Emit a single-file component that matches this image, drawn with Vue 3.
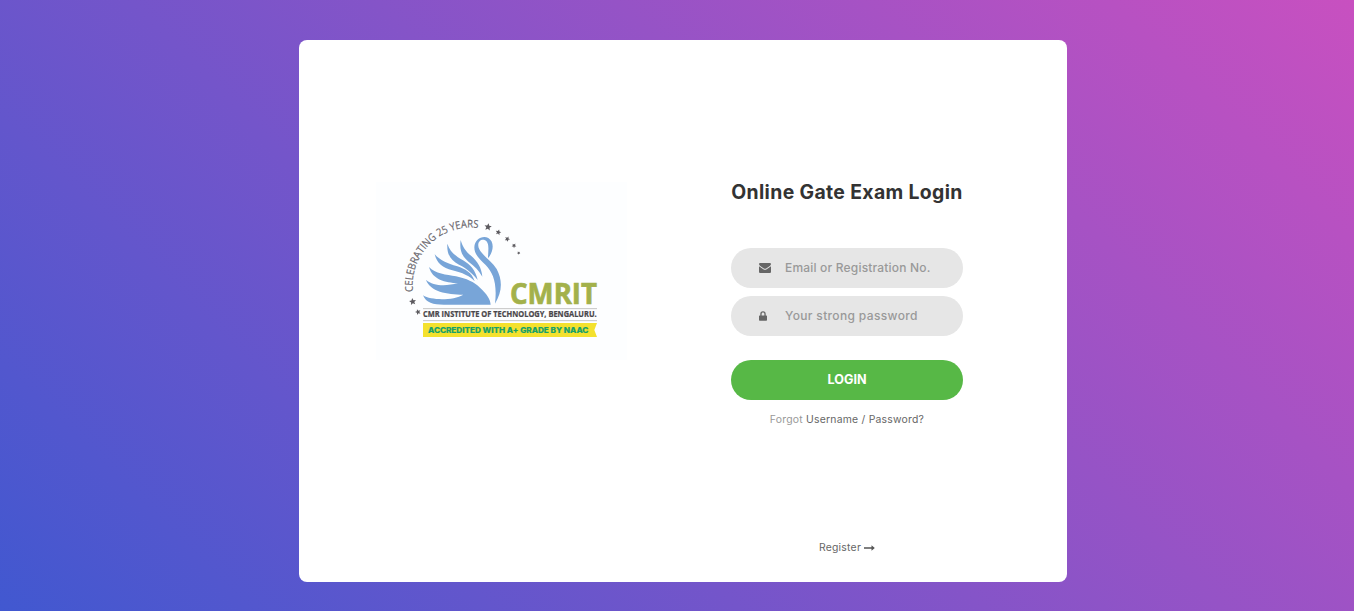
<script setup>
import { ref } from 'vue'

const account = ref('')
const password = ref('')

const stars = [
  { x: 354, y: 156, s: 11.5, r: 8 },
  { x: 385, y: 172, s: 9, r: 15 },
  { x: 412, y: 192, s: 8.5, r: 25 },
  { x: 432, y: 212, s: 7.5, r: 35 },
  { x: 446, y: 234, s: 5.5, r: 45 },
  { x: 128, y: 380, s: 11, r: -8 },
  { x: 144, y: 411, s: 9, r: -20 },
]
</script>

<template>
  <main class="page">
    <section class="card">
      <svg class="logo" viewBox="15 21 759 534" role="img" aria-label="CMRIT">
        <defs>
          <path id="arc" d="M129 350 A174 174 0 0 1 330 160" />
          <polygon id="star" points="0,-1 .28,-.36 .95,-.31 .43,.14 .59,.81 0,.44 -.59,.81 -.43,.14 -.95,-.31 -.28,-.36" />
        </defs>
        <rect x="18" y="21" width="753" height="534" fill="#fdfeff" />
        <text class="arc-text" textLength="314" lengthAdjust="spacingAndGlyphs">
          <textPath href="#arc" textLength="314" lengthAdjust="spacingAndGlyphs">CELEBRATING 25 YEARS</textPath>
        </text>
        <use
          v-for="(star, i) in stars"
          :key="i"
          href="#star"
          fill="#5c5a5f"
          :transform="`translate(${star.x} ${star.y}) rotate(${star.r}) scale(${star.s})`"
        />
        <g fill="#78a5d8">
          <path d="M354 250 C371 229 374 201 355 189 C337 180 314 193 313 217 C313 239 329 252 347 270 C370 294 382 325 375 386 C397 350 398 316 380 282 C365 258 337 241 328 223 C318 203 333 190 345 196 C360 203 354 228 354 250Z" />
          <path d="M272 195 C267 230 279 248 303 266 C321 280 330 293 337 305 C335 278 322 259 304 243 C286 228 278 216 272 195Z" />
          <path d="M232 206 C230 238 242 256 267 269 C292 281 311 299 323 315 C317 286 301 269 279 256 C253 241 240 229 232 206Z" />
          <path d="M194 238 C201 266 218 278 247 286 C277 293 299 303 314 319 C306 292 285 282 262 274 C231 265 211 257 194 238Z" />
          <path d="M177 276 C195 296 230 299 258 304 C290 311 312 321 330 338 C350 356 361 372 362 389 L221 389 C190 389 168 384 159 361 C184 377 250 377 280 359 C230 358 180 350 168 314 C190 335 230 333 264 325 C225 322 188 315 177 276Z" />
        </g>
        <text class="brand" x="420" y="387" textLength="261" lengthAdjust="spacingAndGlyphs">CMRIT</text>
        <path d="M159 401H681 M159 437H681" stroke="#b5b5b5" stroke-width="2.4" />
        <text class="institute" x="159" y="427" textLength="521" lengthAdjust="spacingAndGlyphs">CMR INSTITUTE OF TECHNOLOGY, BENGALURU.</text>
        <path d="M159 444H681L673 465L681 486H159Z" fill="#f4e12e" />
        <text class="grade" x="174" y="473" textLength="481" lengthAdjust="spacingAndGlyphs">ACCREDITED WITH A+ GRADE BY NAAC</text>
      </svg>

      <form class="form" @submit.prevent>
        <h1 class="title">Online Gate Exam Login</h1>

        <label class="field">
          <svg class="icon mail" viewBox="0 0 12 10">
            <path d="M1.1 0H10.9Q12 0 12 1.1Q12 2 11.1 2.7L7.2 5.4Q6 6.2 4.8 5.4L.9 2.7Q0 2 0 1.1Q0 0 1.1 0ZM0 3.2L4.3 6.2Q6 7.4 7.7 6.2L12 3.2V8.9Q12 10 10.9 10H1.1Q0 10 0 8.9Z" />
          </svg>
          <input v-model="account" type="text" class="account" placeholder="Email or Registration No." />
        </label>

        <label class="field">
          <svg class="icon lock" viewBox="0 0 8 10">
            <path fill-rule="evenodd" d="M1.3 4.4V3A2.7 2.7 0 0 1 6.7 3V4.4H7.3Q8 4.4 8 5.1V9.1Q8 9.8 7.3 9.8H.7Q0 9.8 0 9.1V5.1Q0 4.4 .7 4.4ZM2.6 4.4H5.4V3A1.4 1.4 0 0 0 2.6 3Z" />
          </svg>
          <input v-model="password" type="password" class="secret" placeholder="Your strong password" />
        </label>

        <button class="submit" type="submit">LOGIN</button>

        <p class="forgot"><span>Forgot</span> <a>Username / Password?</a></p>

        <a class="register">
          <span>Register</span>
          <svg class="arrow" viewBox="0 0 11 6">
            <path d="M0 2.2H7.5V.3L10.8 3L7.5 5.7V3.8H0Z" />
          </svg>
        </a>
      </form>
    </section>
  </main>
</template>

<style>
body {
  margin: 0;
  overflow: hidden;
}
</style>

<style scoped>
* {
  box-sizing: border-box;
}

.page {
  height: 611px;
  padding: 40px 0 29px 299px;
  background: linear-gradient(-135deg, #c850c0, #4158d0);
  font-family: Inter, 'Liberation Sans', sans-serif;
}

.card {
  width: 768px;
  height: 542px;
  padding: 142px 104px 26px 76px;
  display: flex;
  justify-content: space-between;
  align-items: flex-start;
  background: #fff;
  border-radius: 8px;
}

.logo {
  width: 253px;
  height: 178px;
}

.arc-text {
  font: 400 32px 'Open Sans', sans-serif;
  fill: #68656b;
  stroke: #68656b;
  stroke-width: 0.5px;
}

.brand {
  font: 700 84px 'Open Sans', sans-serif;
  fill: #a3b14b;
  stroke: #a3b14b;
  stroke-width: 2px;
}

.institute {
  font: 700 24px 'Open Sans', sans-serif;
  fill: #49464a;
  stroke: #49464a;
  stroke-width: 0.6px;
}

.grade {
  font: 800 22px Inter, sans-serif;
  fill: #18a06c;
  stroke: #18a06c;
  stroke-width: 0.6px;
}

.form {
  width: 232px;
  height: 374px;
  display: flex;
  flex-direction: column;
}

.title {
  margin: -3px 0 43px;
  font-size: 19.4px;
  line-height: 26px;
  font-weight: 700;
  letter-spacing: 0.36px;
  text-align: center;
  white-space: nowrap;
  color: #333;
}

.field {
  height: 40px;
  margin-bottom: 8px;
  padding-left: 28px;
  display: flex;
  align-items: center;
  background: #e6e6e6;
  border-radius: 20px;
}

.icon {
  flex: none;
  fill: #666;
}

.mail {
  width: 12px;
  height: 10px;
  margin-right: 14px;
}

.lock {
  width: 8px;
  height: 10px;
  margin-right: 18px;
}

input {
  width: 170px;
  padding: 0;
  border: 0;
  outline: 0;
  background: transparent;
  font: 500 12px/18px Inter, sans-serif;
  color: #666;
}

.account {
  letter-spacing: 0.19px;
}

.secret {
  letter-spacing: 0.35px;
}

input::placeholder {
  color: #999;
  opacity: 1;
}

.submit {
  height: 40px;
  margin-top: 16px;
  padding: 0;
  border: 0;
  border-radius: 20px;
  background: #57b846;
  color: #fff;
  font: 700 12.6px/18px Inter, sans-serif;
}

.forgot {
  margin: 11px 0 0;
  font-size: 10.4px;
  line-height: 17px;
  letter-spacing: 0.23px;
  text-align: center;
  color: #999;
}

.forgot a,
.register {
  color: #666;
}

.register {
  margin-top: auto;
  display: flex;
  justify-content: center;
  align-items: center;
  gap: 3px;
  font-size: 10.4px;
  line-height: 17px;
  letter-spacing: 0.23px;
}

.arrow {
  width: 11px;
  height: 6px;
  fill: #555;
}
</style>
